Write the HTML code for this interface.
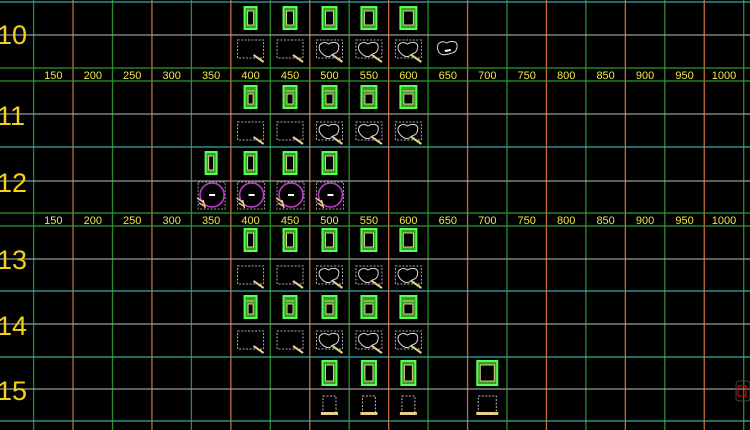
<!DOCTYPE html>
<html><head><meta charset="utf-8"><style>
html,body{margin:0;padding:0;background:#000;width:750px;height:430px;overflow:hidden}
svg{display:block}
</style></head><body>
<svg id="s" width="750" height="430" viewBox="0 0 750 430" xmlns="http://www.w3.org/2000/svg" font-family="Liberation Sans, sans-serif">
<rect width="750" height="430" fill="#000"/>
<g id="g"></g>
<rect x="736" y="381" width="14" height="20" rx="3" fill="none" stroke="#444" stroke-width="1"/>
<rect x="738" y="386" width="8" height="10" fill="none" stroke="#c00" stroke-width="1.2"/>
</svg>
<script>
var g=document.getElementById('g'),h='';
var X0=33.6,DX=39.45;
for(var i=0;i<19;i++){var x=X0+DX*i;h+='<line x1="'+x+'" y1="0" x2="'+x+'" y2="430" stroke="'+(i%2?'#c86a3a':'#2e8a2e')+'" stroke-width="1.3"/>';}
var hl=[[2,'#3aa9a0'],[35,'#9a9a9a'],[68,'#2e9a2e'],[81,'#2e9a2e'],[114,'#9a9a9a'],[147,'#3aa9a0'],[181,'#9a9a9a'],[213,'#2e9a2e'],[226,'#2e9a2e'],[259,'#9a9a9a'],[291,'#3aa9a0'],[324,'#9a9a9a'],[357,'#3aa9a0'],[389,'#9a9a9a'],[421,'#3aa9a0']];
hl.forEach(function(l){h+='<line x1="0" y1="'+l[0]+'" x2="750" y2="'+l[0]+'" stroke="'+l[1]+'" stroke-width="1.3"/>';});
[75,220].forEach(function(y){for(var k=0;k<18;k++){var x=X0+DX*(k+0.5);h+='<text x="'+x+'" y="'+(y+4)+'" fill="#eee84a" font-size="11" text-anchor="middle">'+(150+50*k)+'</text>';}});
[[10,44],[11,125],[12,192],[13,269],[14,335],[15,400]].forEach(function(r){h+='<text x="-3" y="'+r[1]+'" fill="#f2d21a" font-size="27">'+r[0]+'</text>';});
function cx(v){return X0+DX*((v-150)/50+0.5);}
function door(v,cy,w,hh){var x=cx(v);hh=hh||22;
 h+='<rect x="'+(x-w/2)+'" y="'+(cy-hh/2)+'" width="'+w+'" height="'+hh+'" fill="#3a9a22" stroke="#5f5" stroke-width="2"/>';
 h+='<rect x="'+(x-w/2+3)+'" y="'+(cy-hh/2+4)+'" width="'+(w-6)+'" height="'+(hh-8)+'" fill="#000" stroke="#dcd08a" stroke-width="1"/>';}
function door2(v,cy,w){var x=cx(v);
 h+='<rect x="'+(x-w/2)+'" y="'+(cy-11)+'" width="'+w+'" height="22" fill="#3a9a22" stroke="#5f5" stroke-width="2"/>';
 h+='<line x1="'+(x-w/2+2)+'" y1="'+(cy-6)+'" x2="'+(x+w/2-2)+'" y2="'+(cy-6)+'" stroke="#dcd08a"/>';
 h+='<rect x="'+(x-w/2+3.5)+'" y="'+(cy-3)+'" width="'+(w-7)+'" height="10" fill="#000" stroke="#dcd08a" stroke-width="1"/>';}
function box(v,cy,cloud){var x=cx(v);
 h+='<rect x="'+(x-13)+'" y="'+(cy-9)+'" width="26" height="18" fill="none" stroke="#aaa" stroke-width="1" stroke-dasharray="2,1.5"/>';
 if(cloud)h+='<path d="M'+(x-10)+','+(cy+1)+' c-2,-7 5,-9 9,-6 c5,-3 12,-2 10,5 c-1,5 -5,4 -7,6 c-2,3 -8,2 -12,-5z" fill="none" stroke="#ddd" stroke-width="1"/>';
 h+='<line x1="'+(x+3)+'" y1="'+(cy+6)+'" x2="'+(x+13)+'" y2="'+(cy+13)+'" stroke="#e8d08a" stroke-width="2"/>';}
var ws={350:11,400:12,450:13,500:14,550:15,600:16,700:20};
[400,450,500,550,600].forEach(function(v){door(v,18,ws[v]);box(v,49,v>=500);door2(v,97,ws[v]);box(v,131,v>=500);door(v,240,ws[v]);box(v,275,v>=500);door2(v,307,ws[v]);box(v,340,v>=500);});
(function(){var x=cx(650),cy=47;h+='<path d="M'+(x-10)+','+(cy+3)+' c-2,-7 4,-10 9,-7 c5,-3 12,-2 10,5 c-1,5 -5,5 -8,6 c-4,1 -9,2 -11,-4z" fill="none" stroke="#ddd" stroke-width="1"/><line x1="'+(x-3)+'" y1="'+(cy+4)+'" x2="'+(x+3)+'" y2="'+(cy+3)+'" stroke="#fff" stroke-width="2"/>';})();
[350,400,450,500].forEach(function(v){door(v,163,ws[v]);var x=cx(v),cy=195;
 h+='<rect x="'+(x-13)+'" y="'+(cy-13)+'" width="27" height="27" fill="none" stroke="#999" stroke-width="1" stroke-dasharray="2,1.5"/>';
 h+='<circle cx="'+(x+1)+'" cy="'+cy+'" r="12" fill="none" stroke="#c03acb" stroke-width="1.6"/>';
 h+='<rect x="'+(x-2)+'" y="'+(cy-1)+'" width="6" height="2" fill="#fff"/>';
 h+='<path d="M'+(x-14)+','+(cy+3)+' l6,4 M'+(x-12)+','+(cy+8)+' l5,3 M'+(x-8)+','+(cy+5)+' l2,8" stroke="#e8d08a" stroke-width="1.5" fill="none"/>';});
[[500,14],[550,14],[600,14],[700,20]].forEach(function(a){var v=a[0],w=a[1];door(v,373,w,24);var x=cx(v),uw=(v==700?18:13);
 h+='<rect x="'+(x-uw/2)+'" y="396" width="'+uw+'" height="17" fill="none" stroke="#bbb" stroke-dasharray="2,1.5"/>';
 h+='<rect x="'+(x-uw/2-2)+'" y="412" width="'+(uw+4)+'" height="3" fill="#e8d08a"/>';});
g.innerHTML=h;
</script>
</body></html>
